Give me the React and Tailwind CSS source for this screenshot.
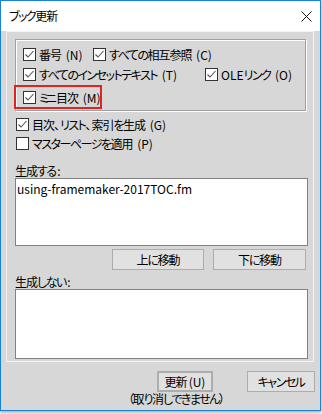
import React from "react";

const font = "font-['Noto_Sans_CJK_JP','Liberation_Sans',sans-serif] [font-feature-settings:'palt']";

const KANA = /[\u3041-\u30ff\uff08\uff09]/;
const PUNCT = /[\u3001\u3002]/;
const KANJI = /[\u4e00-\u9fff]/;

function J({ t }) {
  const runs = [];
  for (const ch of t) {
    const kind = KANA.test(ch) ? "k" : PUNCT.test(ch) ? "p" : KANJI.test(ch) ? "h" : "l";
    const last = runs[runs.length - 1];
    if (last && last.kind === kind) last.s += ch;
    else runs.push({ kind, s: ch });
  }
  return runs.map((r, i) =>
    r.kind === "k" ? (
      <span key={i} className="tracking-[-1.5px]">{r.s}</span>
    ) : r.kind === "h" ? (
      <span key={i} className="tracking-[-1px]">{r.s}</span>
    ) : r.kind === "p" ? (
      <span key={i}>{r.s}</span>
    ) : (
      <span key={i} className={i > 0 ? (r.s.startsWith(" ") ? "ml-[2px]" : "ml-[1.5px]") : ""}>{r.s}</span>
    )
  );
}

function Check({ checked }) {
  return (
    <span className="w-[13px] h-[13px] border border-[#333333] bg-white flex items-center justify-center shrink-0">
      {checked && (
        <svg width="11" height="11" viewBox="0 0 11 11">
          <polyline points="1.5,5.5 4,8 9.5,2" fill="none" stroke="#555555" strokeWidth="1.1" />
        </svg>
      )}
    </span>
  );
}

function CheckLabel({ checked, t, children, className = "" }) {
  return (
    <div className={"flex items-center gap-[3px] h-[13px] " + className}>
      <Check checked={checked} />
      <span className="text-[12px] leading-[13px] whitespace-nowrap text-black">{children || <J t={t} />}</span>
    </div>
  );
}

function Btn({ t, className = "" }) {
  return (
    <div className={"h-[21px] flex items-center justify-center bg-[#e1e1e1] border border-[#adadad] text-[12px] text-black " + className}>
      <J t={t} />
    </div>
  );
}

export default function App() {
  return (
    <div className={"w-[322px] h-[414px] bg-[#f2f2f2] " + font}>
      <div className="w-[321px] h-[411px] border border-[#1883d7] bg-[#d7d7d7] flex flex-col shadow-[0_1px_3px_rgba(0,0,0,0.35)]">
        <div className="h-[30px] bg-white flex items-center justify-between pl-[8px] pr-[8px] shrink-0">
          <span className="text-[12px] text-black"><J t="ブック更新" /></span>
          <svg width="11" height="11" viewBox="0 0 11 11">
            <path d="M0.5 0.5 L10.5 10.5 M10.5 0.5 L0.5 10.5" stroke="#111" strokeWidth="1" />
          </svg>
        </div>
        <div className="flex-1 flex flex-col">
          <div className="ml-[5px] mr-[6px] border border-[#f4f4f4] pl-[8px] pr-[5px] pt-[7px] pb-[2px] flex flex-col">
            <div className="w-[291px] h-[72px] border border-[#a0a0a0] shadow-[1px_1px_0_#ffffff,inset_1px_1px_0_#ffffff] pl-[7px] pt-[8px] flex flex-col">
              <div className="flex">
                <CheckLabel checked className="w-[70px]" t="番号 (N)" />
                <CheckLabel checked t="すべての相互参照 (C)" />
              </div>
              <div className="flex mt-[7px]">
                <CheckLabel checked className="w-[182px]" t="すべてのインセットテキスト (T)" />
                <CheckLabel checked t="OLEリンク (O)" />
              </div>
              <div className="relative mt-[10px]">
                <CheckLabel checked>
                  <span className="tracking-[-3px]">ミニ</span>
                  <span className="ml-[2px] tracking-[-1px]">目次</span>
                  <span className="ml-[2px]"> (M)</span>
                </CheckLabel>
                <div className="absolute left-[-9px] top-[-6px] w-[88px] h-[24px] border-2 border-[#e02424]" />
              </div>
            </div>
            <CheckLabel checked className="mt-[7px] ml-[1px]" t="目次、リスト、索引を生成 (G)" />
            <CheckLabel checked={false} className="mt-[6px] ml-[1px]" t="マスターページを適用 (P)" />
            <div className="mt-[14px] h-[14px] text-[12px] leading-[14px] text-black"><J t="生成する:" /></div>
            <div className="w-[293px] h-[68px] bg-white border border-[#828282] pl-[1px] pt-[3px] text-[12px] leading-[14px] text-black">
              using-framemaker-2017TOC.fm
            </div>
            <div className="flex justify-end gap-[9px] mt-[3px] pr-[2px]">
              <Btn className="w-[92px]" t="上に移動" />
              <Btn className="w-[93px]" t="下に移動" />
            </div>
            <div className="mt-[5px] h-[14px] text-[12px] leading-[14px] text-black"><J t="生成しない:" /></div>
            <div className="w-[293px] h-[70px] bg-white border border-[#828282]" />
          </div>
          <div className="flex mt-[9px] pl-[127px]">
            <div className="w-[119px] flex flex-col">
              <Btn className="w-[56px] ml-[29px] border-2 border-[#0078d7]" t="更新 (U)" />
              <div className="text-[12px] leading-[14px] text-black whitespace-nowrap"><J t="（取り消しできません）" /></div>
            </div>
            <Btn className="w-[68px]" t="キャンセル" />
          </div>
        </div>
      </div>
    </div>
  );
}
